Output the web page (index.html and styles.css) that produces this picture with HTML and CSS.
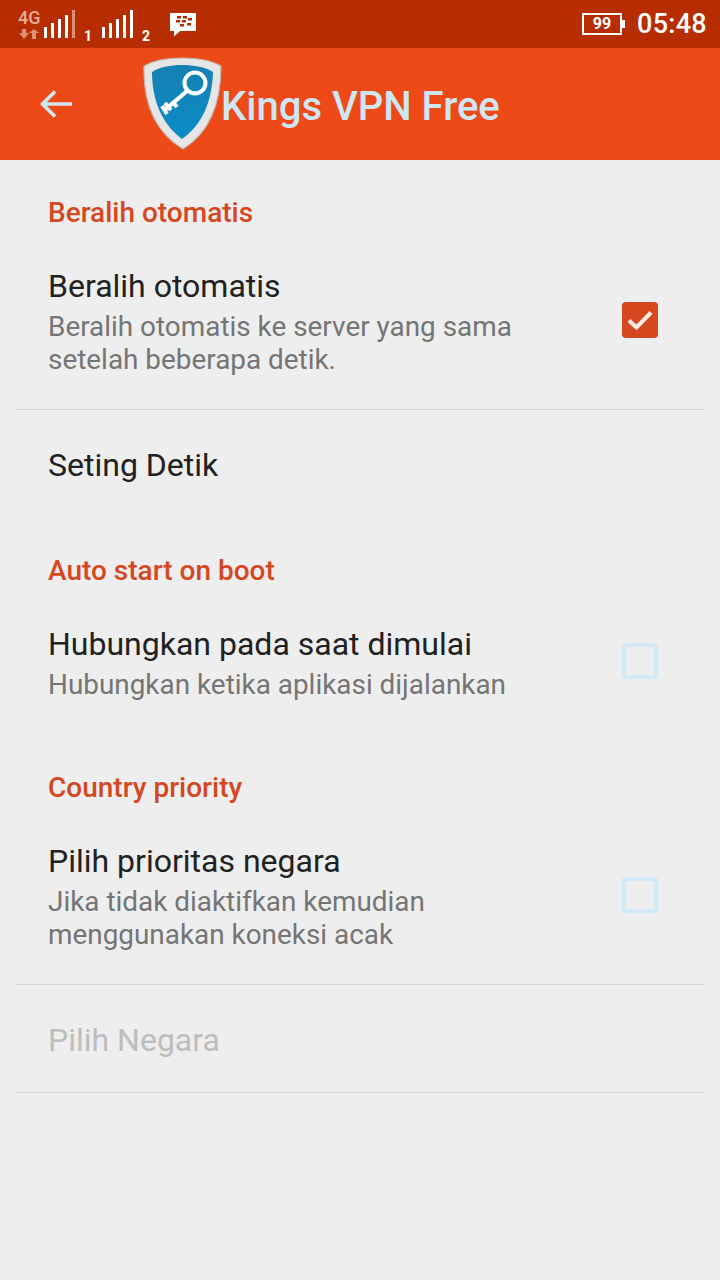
FILE: index.html

```html
<!DOCTYPE html>
<html lang="id">
<head>
  <meta charset="UTF-8" />
  <meta name="viewport" content="width=device-width, initial-scale=1.0"/>
  <title>Kings VPN Free</title>
  <link rel="stylesheet" href="styles.css">
</head>
<body>
  <div class="status-bar">
    <div class="status-left">
      <div class="net-type">
        <span class="net-label">4G</span>
        <svg class="net-arrows" width="20" height="10" viewBox="0 0 20 10"><path d="M3 0h4v4h3l-5 6-5-6h3zM13 10h4V4h3l-5-4-5 4h3z" fill="#dd8f78"/></svg>
      </div>
      <svg class="signal" width="32" height="29" viewBox="0 0 32 29">
        <path d="M0 18h3v11H0zM7 14h3v15H7zM14 10h3v19h-3zM21 6h3v23h-3z" fill="#fff"/>
        <path d="M28 1h3v28h-3z" fill="#dd8f78"/>
      </svg>
      <span class="sim-num sim-one">1</span>
      <svg class="signal" width="32" height="29" viewBox="0 0 32 29">
        <path d="M0 18h3v11H0zM7 14h3v15H7zM14 10h3v19h-3zM21 6h3v23h-3zM28 1h3v28h-3z" fill="#fff"/>
      </svg>
      <span class="sim-num sim-two">2</span>
      <svg class="bbm" width="28" height="24" viewBox="0 0 28 24">
        <path d="M1 0h26v18H11l-6 5.500V18H1z" fill="#fff"/>
        <path d="M8 3h4v2.500H8zM14 3h4v2.500h-4zM7 7h4v2.500H7zM13 7h4v2.500h-4zM19 5h4v2.500h-4zM11 11h4v2.500h-4zM18 10h4v2.500h-4z" fill="#b52d00"/>
      </svg>
    </div>
    <div class="status-right">
      <div class="battery"><span class="battery-level">99</span></div>
      <span class="clock">05:48</span>
    </div>
  </div>

  <div class="app-bar">
    <svg class="back" width="36" height="32" viewBox="0 0 36 32">
      <path d="M34 16H5M17 3.500 4.500 16 17 28.500" fill="none" stroke="#cfe6f5" stroke-width="3.600"/>
    </svg>
    <svg class="logo" width="80" height="96" viewBox="0 0 80 96">
      <defs>
        <linearGradient id="shieldBlue" x1="0" y1="0" x2="0" y2="1">
          <stop offset="0" stop-color="#1581b3"/>
          <stop offset="1" stop-color="#0b8cc6"/>
        </linearGradient>
      </defs>
      <path d="M39 1C54 1 68 3 78 9 78 47 66 76 40 92 13 76 0 47 1 9 11 3 25 1 39 1z" fill="#e6e6e6" stroke="#c0b4ad" stroke-width="1.200"/>
      <path d="M39 8C51 8 62 10 70 15 69 45 59 68 39 82 20 68 9 45 9 15 17 10 27 8 39 8z" fill="url(#shieldBlue)"/>
      <circle cx="52" cy="26" r="10.500" fill="none" stroke="#fff" stroke-width="4"/>
      <path d="M44 34 23 52M22 46l6 7M29 44l5 6M19 49l5 8" fill="none" stroke="#fff" stroke-width="4"/>
    </svg>
    <span class="app-title">Kings VPN Free</span>
  </div>

  <div class="settings">
    <h2 class="section-title first">Beralih otomatis</h2>
    <div class="pref-row">
      <div class="pref-text">
        <div class="pref-name">Beralih otomatis</div>
        <div class="pref-desc">Beralih otomatis ke server yang sama<br>setelah beberapa detik.</div>
      </div>
      <div class="check checked">
        <svg width="36" height="36" viewBox="0 0 36 36"><path d="M7 18.500 14.500 25.500 29 10.500" fill="none" stroke="#fbeee8" stroke-width="4"/></svg>
      </div>
    </div>
    <div class="divider"></div>
    <div class="pref-row single">
      <div class="pref-name">Seting Detik</div>
    </div>

    <h2 class="section-title">Auto start on boot</h2>
    <div class="pref-row">
      <div class="pref-text">
        <div class="pref-name">Hubungkan pada saat dimulai</div>
        <div class="pref-desc">Hubungkan ketika aplikasi dijalankan</div>
      </div>
      <div class="check"></div>
    </div>

    <h2 class="section-title">Country priority</h2>
    <div class="pref-row">
      <div class="pref-text">
        <div class="pref-name">Pilih prioritas negara</div>
        <div class="pref-desc">Jika tidak diaktifkan kemudian<br>menggunakan koneksi acak</div>
      </div>
      <div class="check"></div>
    </div>
    <div class="divider"></div>
    <div class="pref-row single">
      <div class="pref-name disabled">Pilih Negara</div>
    </div>
    <div class="divider"></div>
  </div>
</body>
</html>
```

FILE: styles.css

```css
* { box-sizing: border-box; }
body { margin: 0; width: 720px; height: 1280px; overflow: hidden; background: #eeeeee; font-family: Roboto, "Noto Sans", sans-serif; }

.status-bar { height: 48px; background: #b52d00; display: flex; justify-content: space-between; color: #fff; }
.status-left { display: flex; align-items: flex-start; padding-left: 18px; }
.net-type { width: 26px; display: flex; flex-direction: column; margin-top: 8px; }
.net-label { font-size: 18px; line-height: 20px; font-weight: 500; color: #e6ab98; }
.net-arrows { margin: 1px 0 0 1px; }
.signal { margin-top: 9px; }
.sim-num { font-size: 14px; font-weight: 700; line-height: 14px; margin-top: 29px; }
.sim-one { width: 18px; margin-left: 8px; }
.sim-two { width: 20px; margin-left: 8px; }
.bbm { margin: 13px 0 0 7px; }
.status-right { display: flex; align-items: center; padding-right: 13px; }
.battery { width: 40px; height: 22px; border: 2px solid #fff; display: flex; align-items: center; justify-content: center; position: relative; margin-right: 15px; margin-top: -1px; }
.battery::after { content: ""; position: absolute; right: -5px; top: 5px; width: 3px; height: 8px; background: #fff; }
.battery-level { font-size: 16px; font-weight: 700; }
.clock { font-size: 27px; font-weight: 500; letter-spacing: 0.3px; }

.app-bar { height: 112px; background: #ee4a17; display: flex; align-items: center; padding-left: 38px; }
.back { flex: none; }
.logo { margin-left: 69px; margin-top: 2px; flex: none; }
.app-title { font-size: 40px; font-weight: 500; color: #cfe6f5; margin-left: -2px; margin-top: 4px; }

.settings { padding: 0 16px; }
.section-title { margin: 0; padding: 37px 32px 0; font-size: 28px; line-height: 34px; font-weight: 500; color: #d5481f; }
.section-title.first { padding-top: 36px; }
.pref-row { display: flex; justify-content: space-between; align-items: center; padding: 36px 46px 33px 32px; }
.pref-row.single { display: block; padding: 35px 32px 0; height: 107px; }
.pref-name { font-size: 32px; line-height: 40px; color: #212121; }
.pref-name.disabled { color: #bdbdbd; }
.pref-desc { font-size: 27.9px; line-height: 33px; color: #757575; margin-top: 4px; }
.divider { height: 1px; background: #d6d6d6; }

.check { width: 36px; height: 36px; border: 4px solid #d3e9f7; border-radius: 3px; flex: none; margin-top: -3px; }
.check.checked { background: #d5481f; border: none; border-radius: 4px; }
.check svg { display: block; }
```
